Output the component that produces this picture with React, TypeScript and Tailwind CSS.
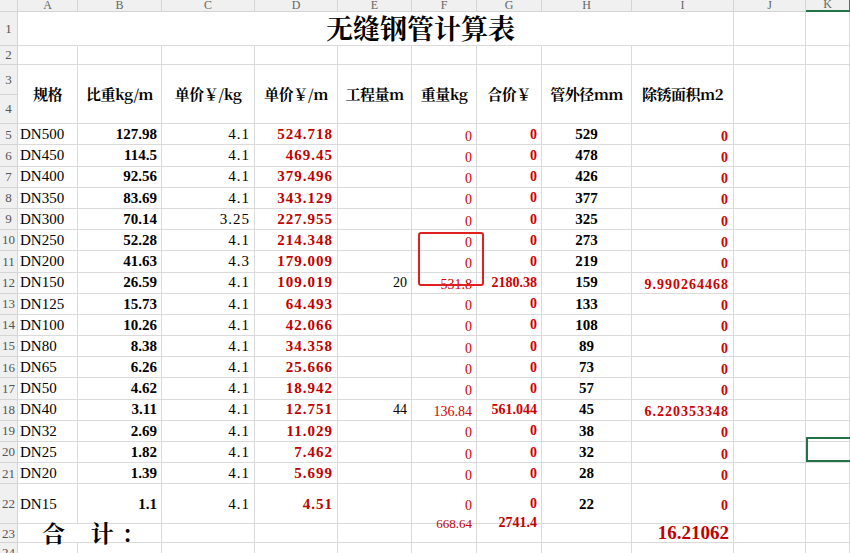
const cols = [18, 60, 84, 93, 83, 74, 65, 65, 90, 102, 72, 44];
const letters = ['A', 'B', 'C', 'D', 'E', 'F', 'G', 'H', 'I', 'J', 'K'];

type R = [string, string, string, string, string, string, string, string, string];
const data: R[] = [
  ['DN500', '127.98', '4.1', '524.718', '', '0', '0', '529', '0'],
  ['DN450', '114.5', '4.1', '469.45', '', '0', '0', '478', '0'],
  ['DN400', '92.56', '4.1', '379.496', '', '0', '0', '426', '0'],
  ['DN350', '83.69', '4.1', '343.129', '', '0', '0', '377', '0'],
  ['DN300', '70.14', '3.25', '227.955', '', '0', '0', '325', '0'],
  ['DN250', '52.28', '4.1', '214.348', '', '0', '0', '273', '0'],
  ['DN200', '41.63', '4.3', '179.009', '', '0', '0', '219', '0'],
  ['DN150', '26.59', '4.1', '109.019', '20', '531.8', '2180.38', '159', '9.990264468'],
  ['DN125', '15.73', '4.1', '64.493', '', '0', '0', '133', '0'],
  ['DN100', '10.26', '4.1', '42.066', '', '0', '0', '108', '0'],
  ['DN80', '8.38', '4.1', '34.358', '', '0', '0', '89', '0'],
  ['DN65', '6.26', '4.1', '25.666', '', '0', '0', '73', '0'],
  ['DN50', '4.62', '4.1', '18.942', '', '0', '0', '57', '0'],
  ['DN40', '3.11', '4.1', '12.751', '44', '136.84', '561.044', '45', '6.220353348'],
  ['DN32', '2.69', '4.1', '11.029', '', '0', '0', '38', '0'],
  ['DN25', '1.82', '4.1', '7.462', '', '0', '0', '32', '0'],
  ['DN20', '1.39', '4.1', '5.699', '', '0', '0', '28', '0'],
  ['DN15', '1.1', '4.1', '4.51', '', '0', '0', '22', '0'],
];

const line = 'border-r border-b border-[#dadada]';
const serif = { fontFamily: '"Liberation Serif", "Noto Sans CJK SC", serif' };
const song = { fontFamily: '"Noto Serif CJK SC", "Noto Sans CJK SC", serif' };

function Num({ n }: { n: number }) {
  return (
    <div className="flex items-center justify-center bg-[#f0f0f0] border-r border-b border-[#d4d4d4] text-[13px] text-[#555] overflow-hidden" style={serif}>
      {n}
    </div>
  );
}

function Blank({ k = 10 }: { k?: number }) {
  return <>{Array.from({ length: k }).map((_, i) => <div key={i} className={line} />)}</>;
}

export default function App() {
  const tpl = cols.map((c) => `${c}px`).join(' ');
  return (
    <div className="relative w-[850px] h-[553px] overflow-hidden bg-white text-black" style={serif}>
      <div className="grid" style={{ gridTemplateColumns: tpl, gridTemplateRows: '12px 34px 19px 38px repeat(18, 21.2px) 40px 19px 19px' }}>
        <div className="bg-[#f0f0f0] border-r border-b border-[#d4d4d4]" />
        {letters.map((l) => (
          <div key={l} className={`flex items-end justify-center bg-[#f0f0f0] border-r border-b text-[12px] leading-none text-[#666] ${l === 'K' ? 'border-b-2 border-b-[#217346]' : 'border-[#d4d4d4]'}`}>{l}</div>
        ))}

        <Num n={1} />
        <div className={`col-span-9 ${line} flex items-center justify-center text-[27px] font-bold pl-[90px]`} style={song}>无缝钢管计算表</div>
        <Blank k={2} />

        <Num n={2} />
        <Blank k={11} />

        <div className="row-span-2 flex flex-col bg-[#f0f0f0] border-r border-[#d4d4d4] text-[13px] text-[#555]">
          <div className="flex-1 flex items-center justify-center border-b border-[#d4d4d4]">3</div>
          <div className="flex-1 flex items-center justify-center border-b border-[#d4d4d4]">4</div>
        </div>
        {['规格', '比重kg/m', '单价￥/kg', '单价￥/m', '工程量m', '重量kg', '合价￥', '管外径mm', '除锈面积m2'].map((h) => (
          <div key={h} className={`row-span-2 ${line} flex items-center justify-center text-[15px] font-bold whitespace-nowrap tracking-[-0.5px]`} style={song}>{h}</div>
        ))}
        <div className={`row-span-2 ${line}`} />
        <div className={`row-span-2 ${line}`} />

        {data.map((r, i) => (
          <Row key={i} n={i + 5} r={r} />
        ))}

        <Num n={23} />
        <div className={`${line} col-span-2 flex items-center pl-[24px] text-[23px] font-bold tracking-[10px]`} style={song}>合 计:</div>
        <Blank k={3} />
        <div className={`${line} flex items-end justify-end pr-1 pb-[9px] text-[13px] text-[#c00000]`}>668.64</div>
        <div className={`${line} flex items-end justify-end pr-1 pb-[9px] text-[14px] font-bold text-[#c00000]`}>2741.4</div>
        <Blank k={1} />
        <div className={`${line} flex items-center justify-end pr-1 text-[19px] font-bold text-[#c00000]`}>16.21062</div>
        <Blank k={2} />

        <Num n={24} />
        <Blank k={11} />
        <Num n={25} />
        <Blank k={11} />
      </div>

      <div className="absolute left-[418px] top-[232px] w-[66px] h-[54px] border-2 border-[#e02020] rounded-[3px]" />
      <div className="absolute left-[806px] top-[437px] w-[46px] h-[25px] border-2 border-[#217346]" />
    </div>
  );
}

function Row({ n, r }: { n: number; r: R }) {
  const cell = `${line} flex items-center whitespace-nowrap overflow-visible`;
  return (
    <>
      <Num n={n} />
      <div className={`${cell} pl-[2px] text-[15px]`}>{r[0]}</div>
      <div className={`${cell} justify-end pr-1 text-[15px] font-bold`}>{r[1]}</div>
      <div className={`${cell} justify-end pr-1 text-[15px] tracking-[1px]`}>{r[2]}</div>
      <div className={`${cell} justify-end pr-1 text-[15px] font-bold text-[#c00000] tracking-[1px]`}>{r[3]}</div>
      <div className={`${cell} justify-end pr-1 text-[14px]`}>{r[4]}</div>
      <div className={`${cell} justify-end pr-1 pt-1 text-[14px] text-[#d00000]`}>{r[5]}</div>
      <div className={`${cell} justify-end pr-1 text-[14px] font-bold text-[#d00000]`}>{r[6]}</div>
      <div className={`${cell} justify-center text-[15px] font-bold`}>{r[7]}</div>
      <div className={`${cell} justify-end pr-1 pt-1 text-[14px] font-bold text-[#d00000] tracking-[1px]`}>{r[8]}</div>
      <div className={line} />
      <div className={line} />
    </>
  );
}
